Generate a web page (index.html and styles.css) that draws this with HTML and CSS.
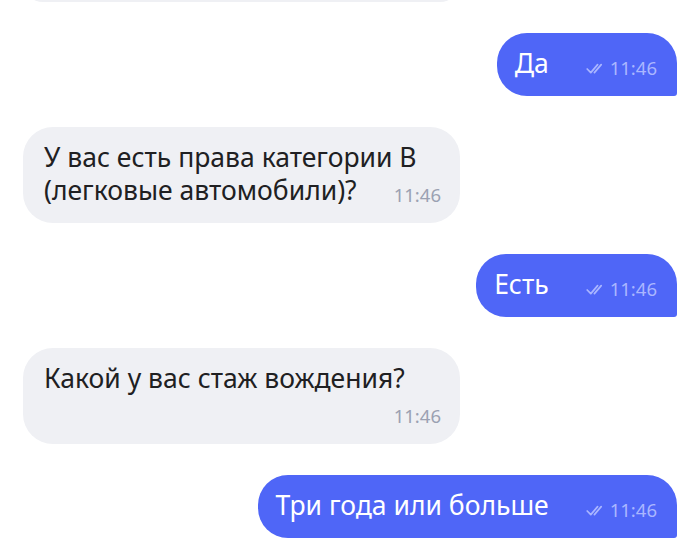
FILE: index.html
```html
<!DOCTYPE html>
<html lang="ru">
<head>
<meta charset="utf-8">
<title>Чат</title>
<link rel="stylesheet" href="styles.css">
</head>
<body>
<div class="chat">
  <div class="bubble in prev"></div>

  <div class="bubble out">
    <span class="text">Да</span>
    <span class="meta"><svg class="check" viewBox="0 0 18 11" width="18" height="11"><path d="M1.2 6 L4.8 9.6 L11.6 1.6 M8.4 9.6 L15.2 1.6" fill="none" stroke="currentColor" stroke-width="1.7" stroke-linecap="round" stroke-linejoin="round"/></svg>11:46</span>
  </div>

  <div class="bubble in">
    <span class="text">У вас есть права категории B (легковые автомобили)?</span>
    <span class="meta">11:46</span>
  </div>

  <div class="bubble out">
    <span class="text">Есть</span>
    <span class="meta"><svg class="check" viewBox="0 0 18 11" width="18" height="11"><path d="M1.2 6 L4.8 9.6 L11.6 1.6 M8.4 9.6 L15.2 1.6" fill="none" stroke="currentColor" stroke-width="1.7" stroke-linecap="round" stroke-linejoin="round"/></svg>11:46</span>
  </div>

  <div class="bubble in">
    <span class="text">Какой у вас стаж вождения?</span>
    <span class="meta">11:46</span>
  </div>

  <div class="bubble out">
    <span class="text">Три года или больше</span>
    <span class="meta"><svg class="check" viewBox="0 0 18 11" width="18" height="11"><path d="M1.2 6 L4.8 9.6 L11.6 1.6 M8.4 9.6 L15.2 1.6" fill="none" stroke="currentColor" stroke-width="1.7" stroke-linecap="round" stroke-linejoin="round"/></svg>11:46</span>
  </div>
</div>
</body>
</html>
```

FILE: styles.css
```css
html, body {
  margin: 0;
  padding: 0;
  background: #ffffff;
}

body {
  font-family: "Noto Sans", "Open Sans", sans-serif;
  overflow: hidden;
}

.chat {
  display: flex;
  flex-direction: column;
  gap: 31px;
  padding: 0 23px;
}

.bubble {
  display: flow-root;
  box-sizing: border-box;
  padding: 14px 19px 16px 21px;
  border-radius: 30px;
  font-size: 26.5px;
  line-height: 33px;
}

.bubble.in {
  align-self: flex-start;
  max-width: 437px;
  background: #eff0f4;
  color: #202022;
}

.bubble.prev {
  width: 437px;
  height: 40px;
  margin-top: -38px;
}

.bubble.out {
  align-self: flex-end;
  background: #4f66f7;
  color: #ffffff;
  border-bottom-right-radius: 3px;
  padding: 14px 20px 16px 18px;
}

.meta {
  float: right;
  margin-left: 37px;
  margin-top: 9px;
  font-size: 18.5px;
  line-height: 24px;
  display: flex;
  align-items: center;
  gap: 6px;
}

.bubble.in .meta {
  color: #9ba1b2;
}

.bubble.out .meta {
  color: #aab6ff;
}

.check {
  display: block;
}
```
